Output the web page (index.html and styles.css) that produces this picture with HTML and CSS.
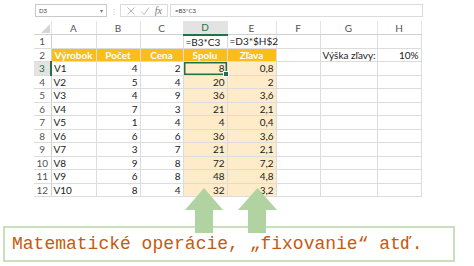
FILE: index.html
```html
<!DOCTYPE html>
<html lang="sk">
<head>
<meta charset="utf-8">
<title>Excel</title>
<link rel="stylesheet" href="styles.css">
</head>
<body>
<div class="page">
  <div class="fbar">
    <div class="namebox"><span>D3</span><span class="dd">▾</span></div>
    <div class="dots">⋮</div>
    <div class="fxbox">
      <svg class="ico" viewBox="0 0 10 10" width="10" height="10"><path d="M1.5 1.5 L8.5 8.5 M8.5 1.5 L1.5 8.5" stroke="#b9b9b9" stroke-width="1" fill="none"/></svg>
      <svg class="ico" viewBox="0 0 10 10" width="10" height="10"><path d="M1 5.5 L4 8.5 L9 1.5" stroke="#b9b9b9" stroke-width="1" fill="none"/></svg>
      <span class="fx">fx</span>
    </div>
    <div class="finput">=B3*C3</div>
  </div>

  <table class="sheet">
    <colgroup>
      <col class="w-rn"><col class="w-a"><col class="w-b"><col class="w-c"><col class="w-d"><col class="w-e"><col class="w-f"><col class="w-g"><col class="w-h">
    </colgroup>
    <tr class="hdr">
      <th class="corner"><svg viewBox="0 0 10 10" width="9" height="9"><path d="M10 0 L10 10 L0 10 Z" fill="#d6d6d6"/></svg></th>
      <th>A</th><th>B</th><th>C</th><th class="csel">D</th><th>E</th><th>F</th><th>G</th><th>H</th>
    </tr>
    <tr>
      <th class="rn">1</th><td></td><td></td><td></td><td class="t">=B3*C3</td><td class="t">=D3*$H$2</td><td></td><td></td><td></td>
    </tr>
    <tr>
      <th class="rn">2</th><td class="o">Výrobok</td><td class="o">Počet</td><td class="o">Cena</td><td class="o">Spolu</td><td class="o">Zľava</td><td></td><td class="t">Výška zľavy:</td><td class="n">10%</td>
    </tr>
    <tr>
      <th class="rn rsel">3</th><td class="t">V1</td><td class="n">4</td><td class="n">2</td><td class="n p cur">8</td><td class="n p">0,8</td><td></td><td></td><td></td>
    </tr>
    <tr><th class="rn">4</th><td class="t">V2</td><td class="n">5</td><td class="n">4</td><td class="n p">20</td><td class="n p">2</td><td></td><td></td><td></td></tr>
    <tr><th class="rn">5</th><td class="t">V3</td><td class="n">4</td><td class="n">9</td><td class="n p">36</td><td class="n p">3,6</td><td></td><td></td><td></td></tr>
    <tr><th class="rn">6</th><td class="t">V4</td><td class="n">7</td><td class="n">3</td><td class="n p">21</td><td class="n p">2,1</td><td></td><td></td><td></td></tr>
    <tr><th class="rn">7</th><td class="t">V5</td><td class="n">1</td><td class="n">4</td><td class="n p">4</td><td class="n p">0,4</td><td></td><td></td><td></td></tr>
    <tr><th class="rn">8</th><td class="t">V6</td><td class="n">6</td><td class="n">6</td><td class="n p">36</td><td class="n p">3,6</td><td></td><td></td><td></td></tr>
    <tr><th class="rn">9</th><td class="t">V7</td><td class="n">3</td><td class="n">7</td><td class="n p">21</td><td class="n p">2,1</td><td></td><td></td><td></td></tr>
    <tr><th class="rn">10</th><td class="t">V8</td><td class="n">9</td><td class="n">8</td><td class="n p">72</td><td class="n p">7,2</td><td></td><td></td><td></td></tr>
    <tr><th class="rn">11</th><td class="t">V9</td><td class="n">6</td><td class="n">8</td><td class="n p">48</td><td class="n p">4,8</td><td></td><td></td><td></td></tr>
    <tr><th class="rn">12</th><td class="t">V10</td><td class="n">8</td><td class="n">4</td><td class="n p">32</td><td class="n p">3,2</td><td></td><td></td><td></td></tr>
  </table>

  <div class="callout">Matematické operácie, „fixovanie“ atď.</div>

  <svg class="arrows" viewBox="0 0 474 266" width="474" height="266">
    <path d="M204 188 L223 210 L213 210 L213 233 L195 233 L195 210 L185 210 Z" fill="#b1d3a1"/>
    <path d="M257.5 188 L277 210 L266 210 L266 233 L248 233 L248 210 L238 210 Z" fill="#b1d3a1"/>
  </svg>
</div>
</body>
</html>
```

FILE: styles.css
```css
* { box-sizing: border-box; }
html, body { margin: 0; padding: 0; background: #fff; }
.page {
  position: relative;
  width: 474px;
  height: 266px;
  overflow: hidden;
  font-family: Lato, "Liberation Sans", sans-serif;
  color: #222;
}

.fbar {
  display: flex;
  align-items: stretch;
  height: 13px;
  margin: 4px 0 0 35px;
  font-size: 6px;
  color: #444;
}
.namebox {
  width: 72px;
  border: 1px solid #c9c9c9;
  display: flex;
  align-items: center;
  justify-content: space-between;
  padding: 0 3px;
}
.dd { font-size: 6px; color: #777; }
.dots {
  width: 13px;
  display: flex;
  align-items: center;
  justify-content: center;
  color: #bdbdbd;
  font-size: 8px;
}
.fxbox {
  width: 48px;
  border: 1px solid #dadada;
  display: flex;
  align-items: center;
  justify-content: space-around;
  padding: 0 3px;
}
.ico { display: block; }
.fx {
  font-family: "Liberation Serif", serif;
  font-style: italic;
  font-size: 10px;
  color: #777;
}
.finput {
  width: 253px;
  margin-left: 2px;
  border: 1px solid #dadada;
  display: flex;
  align-items: center;
  padding-left: 4px;
}

.sheet {
  margin: 4px 0 0 34px;
  border-collapse: collapse;
  table-layout: fixed;
  width: 387px;
  font-size: 10px;
}
.w-rn { width: 17px; }
.w-a { width: 45px; }
.w-b { width: 44px; }
.w-c { width: 43px; }
.w-d { width: 44px; }
.w-e { width: 49px; }
.w-f { width: 44px; }
.w-g { width: 57px; }
.w-h { width: 44px; }

.sheet tr { height: 13.5px; }
.sheet th, .sheet td {
  padding: 0 2px;
  height: 13.5px;
  line-height: 12px;
  white-space: nowrap;
  overflow: visible;
  border-right: 1px solid #dcdcdc;
  border-bottom: 1px solid #dcdcdc;
}
.hdr th {
  font-weight: normal;
  color: #555;
  text-align: center;
  border-right: 1px solid #e4e4e4;
  border-bottom: 1px solid #d0d0d0;
}
.corner { text-align: right !important; vertical-align: bottom; padding: 0 1px 1px 0 !important; }
.corner svg { display: block; margin-left: auto; }
.hdr th.csel {
  background: #e3e3e3;
  color: #217346;
  border-bottom: 2px solid #217346;
}
.rn {
  font-weight: normal;
  color: #555;
  text-align: center;
  border-right: 1px solid #d0d0d0 !important;
}
.rn.rsel {
  background: #e3e3e3;
  color: #217346;
  border-right: 2px solid #217346 !important;
}
.t { text-align: left; }
.n { text-align: right; }
.o {
  background: #fbbd19;
  color: #fff;
  font-weight: bold;
  text-align: center;
  border-right-color: #fbbd19;
  border-bottom-color: #fbbd19;
}
.p {
  background: #fdebc9;
  border-right-color: #fdebc9;
  border-bottom-color: #fdebc9;
}
.cur {
  position: relative;
  box-shadow: inset 0 0 0 1.5px #217346;
}
.cur::after {
  content: "";
  position: absolute;
  right: -2px;
  bottom: -2px;
  width: 4px;
  height: 4px;
  background: #217346;
  border: 1px solid #fff;
}

.callout {
  margin: 29px 0 0 3px;
  width: 452px;
  height: 36px;
  border: 2px solid #c9e1ba;
  padding-left: 7px;
  display: flex;
  align-items: center;
  font-family: "Liberation Mono", "DejaVu Sans Mono", monospace;
  font-size: 18px;
  color: #c55a11;
}

.arrows {
  position: absolute;
  left: 0;
  top: 0;
  pointer-events: none;
}
```
